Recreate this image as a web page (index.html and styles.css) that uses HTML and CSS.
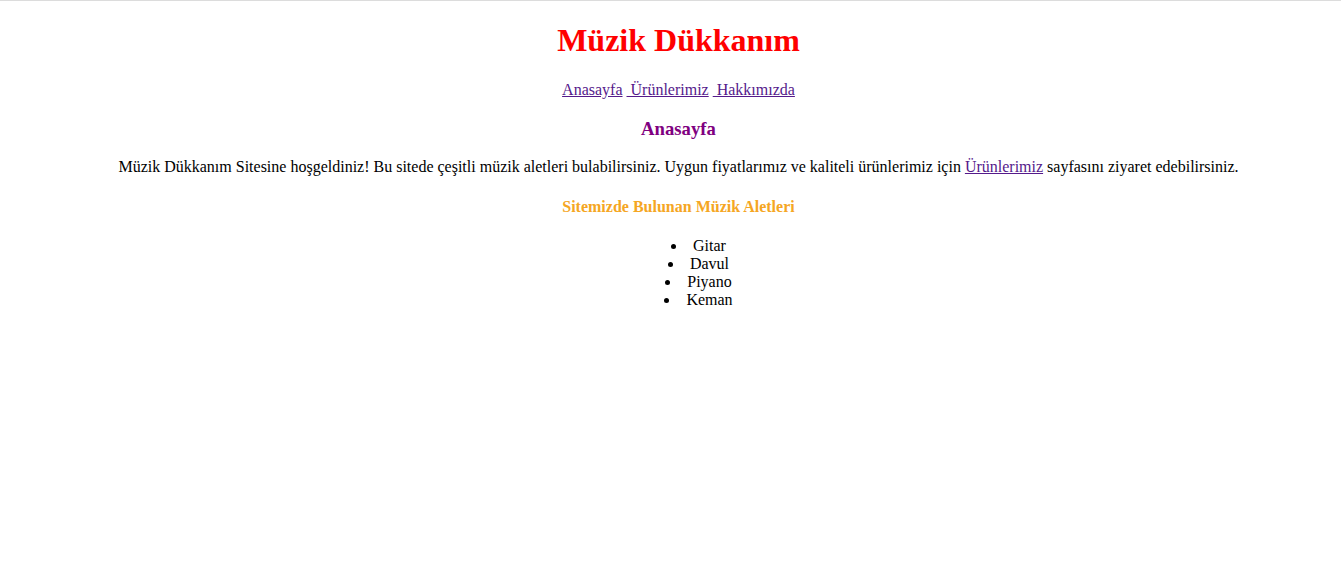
FILE: index.html
```html
<!DOCTYPE html>
<html lang="tr">
<head>
<meta charset="utf-8">
<title>Müzik Dükkanım</title>
<link rel="stylesheet" href="styles.css">
</head>
<body>
<h1 class="site-title">Müzik Dükkanım</h1>
<p class="nav"><a class="link" href="#">Anasayfa</a> <a class="link" href="#">&nbsp;Ürünlerimiz</a> <a class="link" href="#">&nbsp;Hakkımızda</a></p>
<h3 class="page-title">Anasayfa</h3>
<p class="intro">Müzik Dükkanım Sitesine hoşgeldiniz! Bu sitede çeşitli müzik aletleri bulabilirsiniz. Uygun fiyatlarımız ve kaliteli ürünlerimiz için <a class="link" href="#">Ürünlerimiz</a> sayfasını ziyaret edebilirsiniz.</p>
<h4 class="section-title">Sitemizde Bulunan Müzik Aletleri</h4>
<ul class="instruments">
<li>Gitar</li>
<li>Davul</li>
<li>Piyano</li>
<li>Keman</li>
</ul>
</body>
</html>
```

FILE: styles.css
```css
html {
  border-top: 1px solid #dcdcdc;
  background: #fff;
}
body {
  margin: 0 0 8px 16px;
  font-family: "Liberation Serif", "Times New Roman", serif;
  font-size: 16px;
  color: #000;
  text-align: center;
}
.site-title {
  color: #ff0000;
}
.link {
  color: #551a8b;
}
.page-title {
  color: #800080;
}
.section-title {
  color: #f5a623;
}
.instruments {
  list-style-position: inside;
}
```
